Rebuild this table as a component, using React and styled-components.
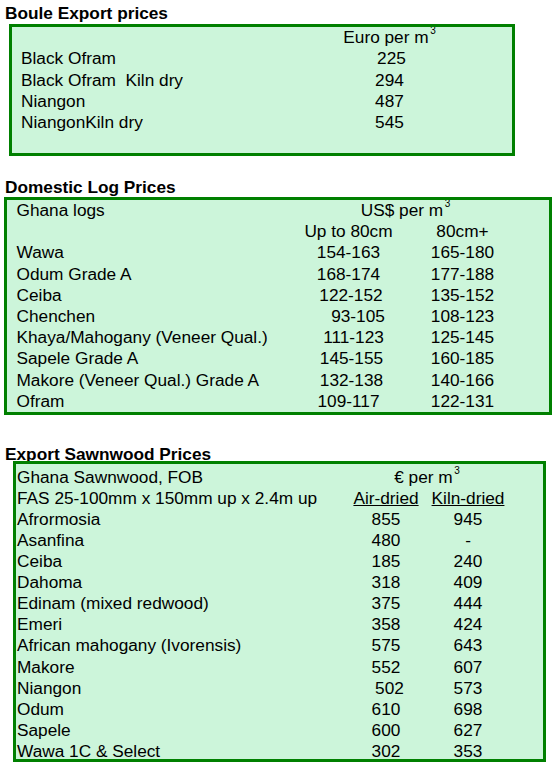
import React from 'react';
import styled, { createGlobalStyle } from 'styled-components';

const GlobalStyle = createGlobalStyle`
  html, body {
    margin: 0;
    padding: 0;
    background: #ffffff;
  }
  body {
    font-family: "Liberation Sans", Arial, sans-serif;
    color: #000;
    width: 556px;
    height: 777px;
    overflow: hidden;
  }
`

const boule = [
  { name: 'Black Ofram', price: '225', shift: 2 },
  { name: 'Black Ofram  Kiln dry', price: '294' },
  { name: 'Niangon', price: '487' },
  { name: 'NiangonKiln dry', price: '545' },
]

const logs = [
  { name: 'Wawa', a: '154-163', b: '165-180' },
  { name: 'Odum Grade A', a: '168-174', b: '177-188' },
  { name: 'Ceiba', a: '122-152', b: '135-152', shift: 2.5 },
  { name: 'Chenchen', a: '93-105', b: '108-123', shift: 9.5 },
  { name: 'Khaya/Mahogany (Veneer Qual.)', a: '111-123', b: '125-145', shift: 5 },
  { name: 'Sapele Grade A', a: '145-155', b: '160-185', shift: 3 },
  { name: 'Makore (Veneer Qual.) Grade A', a: '132-138', b: '140-166', shift: 3 },
  { name: 'Ofram', a: '109-117', b: '122-131' },
]

const sawn = [
  { name: 'Afrormosia', a: '855', b: '945' },
  { name: 'Asanfina', a: '480', b: '-' },
  { name: 'Ceiba', a: '185', b: '240' },
  { name: 'Dahoma', a: '318', b: '409' },
  { name: 'Edinam (mixed redwood)', a: '375', b: '444' },
  { name: 'Emeri', a: '358', b: '424' },
  { name: 'African mahogany (Ivorensis)', a: '575', b: '643' },
  { name: 'Makore', a: '552', b: '607' },
  { name: 'Niangon', a: '502', b: '573', shift: 3.5 },
  { name: 'Odum', a: '610', b: '698' },
  { name: 'Sapele', a: '600', b: '627' },
  { name: 'Wawa 1C & Select', a: '302', b: '353' },
]

function App() {
  return (
    <Page>
      <GlobalStyle />

      <Title $top={4} $gap={2}>Boule Export prices</Title>
      <Box $left={9} $width={506} $height={132} $pad={9} $cols="318.5px 100px" $row={21.25}>
        <Cell />
        <Cell $center>Euro per m<Sup>3</Sup></Cell>
        {boule.map((r) => (
          <React.Fragment key={r.name}>
            <Cell>{r.name}</Cell>
            <Cell $center $shift={r.shift}>{r.price}</Cell>
          </React.Fragment>
        ))}
      </Box>

      <Title $top={21.5} $gap={1.5}>Domestic Log Prices</Title>
      <Box $left={4} $width={548} $height={218} $pad={9.5} $cols="275px 114px 114px" $row={21.2}>
        <Cell>Ghana logs</Cell>
        <Cell $center $span={2}>US$ per m<Sup>3</Sup></Cell>
        <Cell />
        <Cell $center>Up to 80cm</Cell>
        <Cell $center>80cm+</Cell>
        {logs.map((r) => (
          <React.Fragment key={r.name}>
            <Cell>{r.name}</Cell>
            <Cell $center $shift={r.shift}>{r.a}</Cell>
            <Cell $center>{r.b}</Cell>
          </React.Fragment>
        ))}
      </Box>

      <Title $top={29.5} $gap={-1.5}>Export Sawnwood Prices</Title>
      <Box $left={13} $width={533} $height={301} $pad={1} $padTop={2.8} $cols="328px 82px 82px" $row={21.08}>
        <Cell>Ghana Sawnwood, FOB</Cell>
        <Cell $center $span={2}>€ per m<Sup>3</Sup></Cell>
        <Cell>FAS 25-100mm x 150mm up x 2.4m up</Cell>
        <Cell $center><Under>Air-dried</Under></Cell>
        <Cell $center><Under>Kiln-dried</Under></Cell>
        {sawn.map((r) => (
          <React.Fragment key={r.name}>
            <Cell>{r.name}</Cell>
            <Cell $center $shift={r.shift}>{r.a}</Cell>
            <Cell $center>{r.b}</Cell>
          </React.Fragment>
        ))}
      </Box>
    </Page>
  )
}

const Page = styled.div`
  display: flex;
  flex-direction: column;
  align-items: flex-start;
  font-size: 17.25px;
`

const Title = styled.h2`
  margin: ${(p) => p.$top}px 0 ${(p) => p.$gap}px 5px;
  height: 18px;
  line-height: 18px;
  font-size: 17.25px;
  font-weight: bold;
  white-space: nowrap;
`

const Box = styled.div`
  box-sizing: border-box;
  margin-left: ${(p) => p.$left}px;
  width: ${(p) => p.$width}px;
  height: ${(p) => p.$height}px;
  padding: ${(p) => p.$padTop || 0}px 0 0 ${(p) => p.$pad}px;
  border: 3px solid #008000;
  background: #ccf5da;
  display: grid;
  grid-template-columns: ${(p) => p.$cols};
  grid-auto-rows: ${(p) => p.$row}px;
  align-content: start;
  line-height: ${(p) => p.$row}px;
  overflow: hidden;
`

const Cell = styled.div`
  white-space: pre;
  text-align: ${(p) => (p.$center ? 'center' : 'left')};
  grid-column: span ${(p) => p.$span || 1};
  padding-left: ${(p) => (p.$shift ? p.$shift * 2 : 0)}px;
`

const Sup = styled.sup`
  font-size: 10px;
  line-height: 0;
  vertical-align: 9px;
  margin-left: 1.5px;
`

const Under = styled.span`
  text-decoration: underline;
  text-decoration-thickness: 1px;
`

export default App
